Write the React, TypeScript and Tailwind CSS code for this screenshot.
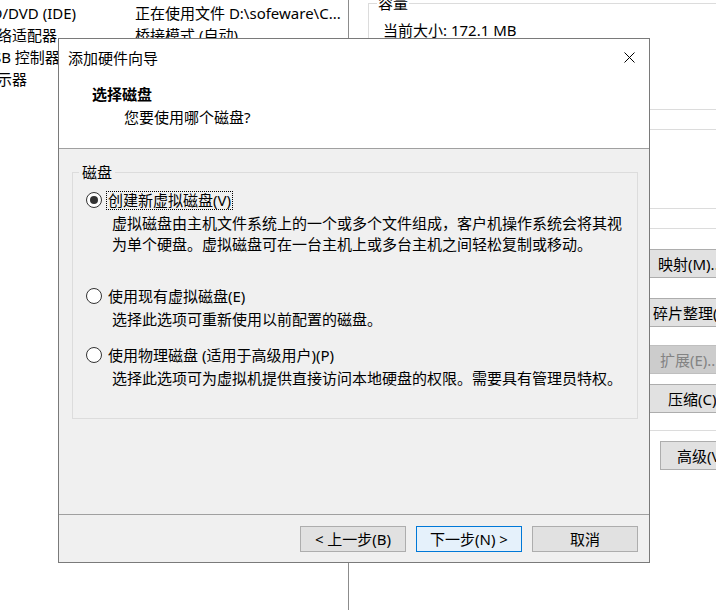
import React from "react";

const rows: [string, string][] = [
  ["CD/DVD (IDE)", "正在使用文件 D:\\sofeware\\C..."],
  ["网络适配器", "桥接模式 (自动)"],
  ["USB 控制器", "存在"],
  ["显示器", "自动检测"],
];

function Radio({ checked }: { checked?: boolean }) {
  return (
    <span className="flex h-4 w-4 shrink-0 items-center justify-center rounded-full border border-[#333333] bg-white">
      {checked ? <span className="h-2 w-2 rounded-full bg-[#333333]" /> : null}
    </span>
  );
}

export default function App() {
  return (
    <div className="relative h-[610px] w-[716px] overflow-hidden bg-white font-['Noto_Sans','Noto_Sans_CJK_SC',sans-serif] text-[15px] text-black">
      {/* background window */}
      <div className="flex h-full">
        <div className="w-[349px] shrink-0 overflow-hidden border-r border-[#8c8c8c] pt-[2px]">
          {rows.map(([a, b]) => (
            <div key={a} className="flex h-[22px] items-center whitespace-nowrap leading-[22px]">
              <span className="-ml-[18px] w-[153px] shrink-0">{a}</span>
              <span>{b}</span>
            </div>
          ))}
        </div>
        <div className="flex-1 overflow-hidden">
          <div className="ml-[19px] mt-[3px] h-[107px] w-[400px] border border-[#dcdcdc]">
            <div className="-mt-[11px] ml-[8px] w-fit bg-white px-[1px] leading-[20px]">容量</div>
            <div className="ml-[14px] mt-[7px] whitespace-nowrap leading-[20px]">当前大小: 172.1 MB</div>
          </div>
          <div className="ml-[19px] mt-[19px] h-[80px] w-[400px] border border-[#dcdcdc]">
            <div className="-mt-[11px] ml-[8px] w-fit bg-white px-[1px] leading-[20px]">磁盘信息</div>
          </div>
          <div className="ml-[19px] mt-[19px] h-[203px] w-[400px] border border-[#dcdcdc]">
            <div className="-mt-[11px] ml-[8px] w-fit bg-white px-[1px] leading-[20px]">磁盘实用工具</div>
            <div className="ml-[231px] mt-[11px] flex h-[29px] w-[160px] items-center border border-[#adadad] bg-[#e1e1e1] pl-[57px] leading-[20px] whitespace-nowrap">映射(M)...</div>
            <div className="ml-[231px] mt-[20px] flex h-[29px] w-[160px] items-center border border-[#adadad] bg-[#e1e1e1] pl-[52px] leading-[20px] whitespace-nowrap">碎片整理(D)...</div>
            <div className="ml-[231px] mt-[18px] flex h-[29px] w-[160px] items-center border border-[#bfbfbf] bg-[#cccccc] pl-[59px] leading-[20px] whitespace-nowrap text-[#838383]">扩展(E)...</div>
            <div className="ml-[231px] mt-[10px] flex h-[29px] w-[160px] items-center border border-[#adadad] bg-[#e1e1e1] pl-[67px] leading-[20px] whitespace-nowrap">压缩(C)</div>
          </div>
          <div className="ml-[311px] mt-[10px] flex h-[29px] w-[160px] items-center border border-[#adadad] bg-[#e1e1e1] pl-[16px] leading-[20px] whitespace-nowrap">高级(V)...</div>
        </div>
      </div>

      {/* wizard dialog */}
      <div className="absolute left-[58px] top-[38px] flex h-[525px] w-[592px] flex-col border border-[#7a7a7a] bg-[#f0f0f0]">
        <div className="flex h-[37px] shrink-0 items-center justify-between bg-white pl-[9px] pr-[14px]">
          <span className="leading-[20px]">添加硬件向导</span>
          <svg width="11" height="11" viewBox="0 0 11 11" className="block">
            <path d="M0.5 0.5 L10.5 10.5 M10.5 0.5 L0.5 10.5" stroke="#000" strokeWidth="1" fill="none" />
          </svg>
        </div>
        <div className="h-[73px] shrink-0 border-b border-[#a0a0a0] bg-white pt-[8px]">
          <div className="pl-[33px] font-bold leading-[20px]">选择磁盘</div>
          <div className="mt-[3px] pl-[65px] leading-[20px]">您要使用哪个磁盘?</div>
        </div>
        <div className="h-[365px] shrink-0 pl-[13px] pr-[11px] pt-[23px]">
          <div className="border border-[#dcdcdc] pb-[29px]">
            <div className="-mt-[11px] ml-[6px] w-fit bg-[#f0f0f0] px-[3px] leading-[20px]">磁盘</div>
            <div className="mt-[8px] flex h-[20px] items-center pl-[13px]">
              <Radio checked />
              <span className="ml-[4px] border border-dotted border-black px-[1px] leading-[17px]">创建新虚拟磁盘(V)</span>
            </div>
            <div className="mt-[3px] pl-[39px] leading-[21px]">
              <div>虚拟磁盘由主机文件系统上的一个或多个文件组成，客户机操作系统会将其视</div>
              <div>为单个硬盘。虚拟磁盘可在一台主机上或多台主机之间轻松复制或移动。</div>
            </div>
            <div className="mt-[31px] flex h-[20px] items-center pl-[13px]">
              <Radio />
              <span className="ml-[4px] border border-transparent px-[1px] leading-[17px]">使用现有虚拟磁盘(E)</span>
            </div>
            <div className="mt-[3px] pl-[39px] leading-[21px]">选择此选项可重新使用以前配置的磁盘。</div>
            <div className="mt-[15px] flex h-[20px] items-center pl-[13px]">
              <Radio />
              <span className="ml-[4px] border border-transparent px-[1px] leading-[17px]">使用物理磁盘 (适用于高级用户)(P)</span>
            </div>
            <div className="mt-[3px] pl-[39px] leading-[21px]">选择此选项可为虚拟机提供直接访问本地硬盘的权限。需要具有管理员特权。</div>
          </div>
        </div>
        <div className="flex flex-1 justify-end gap-[10px] border-t border-[#a0a0a0] pr-[11px] pt-[11px]">
          <div className="flex h-[26px] w-[106px] items-center justify-center border border-[#adadad] bg-[#e1e1e1] leading-[20px]">&lt; 上一步(B)</div>
          <div className="flex h-[26px] w-[106px] items-center justify-center border border-[#0078d7] bg-[#e5f1fb] leading-[20px]">下一步(N) &gt;</div>
          <div className="flex h-[26px] w-[106px] items-center justify-center border border-[#adadad] bg-[#e1e1e1] leading-[20px]">取消</div>
        </div>
      </div>
    </div>
  );
}
